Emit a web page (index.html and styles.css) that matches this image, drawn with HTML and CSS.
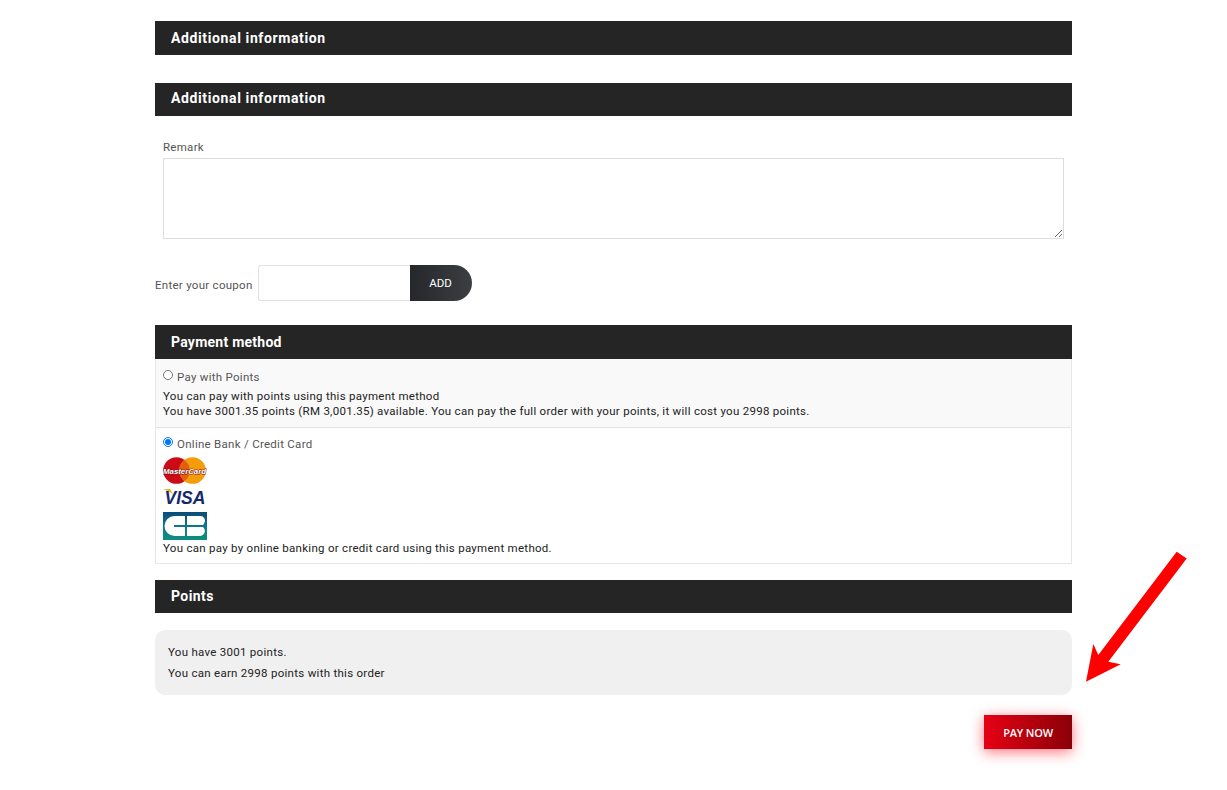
FILE: index.html
```html
<!DOCTYPE html>
<html lang="en">
<head>
<meta charset="utf-8">
<title>Checkout</title>
<link rel="stylesheet" href="styles.css">
</head>
<body>
<main class="page">
  <h2 class="bar bar-wide">Additional information</h2>
  <h2 class="bar bar-wide bar-second">Additional information</h2>
  <section class="remark">
    <label class="remark-label" for="remark">Remark</label>
    <textarea id="remark" class="remark-input"></textarea>
  </section>
  <div class="coupon">
    <label class="coupon-label" for="coupon">Enter your coupon</label>
    <input id="coupon" class="coupon-input" type="text">
    <button class="coupon-btn" type="button">ADD</button>
  </div>
  <h2 class="bar bar-payment">Payment method</h2>
  <section class="methods">
    <div class="method method-points">
      <label class="method-label"><input class="radio" type="radio" name="pay">Pay with Points</label>
      <p class="method-text">You can pay with points using this payment method<br>You have 3001.35 points (RM 3,001.35) available. You can pay the full order with your points, it will cost you 2998 points.</p>
    </div>
    <div class="method method-card">
      <label class="method-label"><input class="radio" type="radio" name="pay" checked>Online Bank / Credit Card</label>
      <div class="logos">
        <svg class="logo" width="44" height="27" viewBox="0 0 44 27" role="img" aria-label="MasterCard">
          <circle cx="13.500" cy="13.500" r="13.300" fill="#cc0b16"/>
          <circle cx="29.500" cy="13.500" r="13.300" fill="#f59c0d"/>
          <path d="M21.500 2.900a13.300 13.300 0 0 1 0 21.200a13.300 13.300 0 0 1 0-21.200z" fill="#e0600f"/>
          <text class="mc-text" x="21.500" y="16.500">MasterCard</text>
        </svg>
        <svg class="logo" width="44" height="23" viewBox="0 0 44 23" role="img" aria-label="Visa">
          <path d="M0 4h7l4 7C8 7 4 5 0 4z" fill="#f2ae14"/>
          <text class="visa-text" x="1.500" y="18.500">VISA</text>
        </svg>
        <svg class="logo logo-cb" width="44" height="28" viewBox="0 0 44 28" role="img" aria-label="CB">
          <defs>
            <linearGradient id="cbg" x1="0" y1="0" x2="0" y2="1">
              <stop offset="0" stop-color="#0b4a78"/>
              <stop offset=".55" stop-color="#0d7a92"/>
              <stop offset="1" stop-color="#0f8f7c"/>
            </linearGradient>
          </defs>
          <rect width="44" height="28" fill="url(#cbg)"/>
          <path d="M22 4H11.500a10 10 0 0 0 0 20H22v-9H11v-2h11z" fill="#fff"/>
          <path d="M24 4h13.500a4.500 4.500 0 0 1 4 6.500q-.5 1.500-1.500 2.500H24zM24 15h16q1.500 1 1.800 3.500A5 5 0 0 1 37 24H24z" fill="#fff"/>
        </svg>
      </div>
      <p class="method-text">You can pay by online banking or credit card using this payment method.</p>
    </div>
  </section>
  <h2 class="bar bar-points">Points</h2>
  <section class="points">
    <p class="points-line">You have 3001 points.</p>
    <p class="points-line">You can earn 2998 points with this order</p>
  </section>
  <div class="actions">
    <button class="pay" type="button">PAY NOW</button>
  </div>
</main>
<svg class="arrow" width="1227" height="790" viewBox="0 0 1227 790" aria-hidden="true">
  <path d="M1176.700 551.700L1186.700 558.500L1108.300 661.700L1120.700 664.300L1086 681.700L1093.300 644L1098.300 655z" fill="#fe0000"/>
</svg>
</body>
</html>
```
FILE: styles.css
```css
* { box-sizing: border-box; }
html, body { margin: 0; padding: 0; background: #fff; }
body {
  font-family: Roboto, "Liberation Sans", sans-serif;
  font-size: 11.500px;
  color: #222;
  letter-spacing: .28px;
  height: 790px;
  overflow: hidden;
  position: relative;
}
.page {
  width: 917px;
  margin-left: 155px;
  padding-top: 21px;
}
.bar {
  margin: 0;
  height: 34px;
  line-height: 34px;
  padding-left: 16px;
  background: #252525;
  color: #fff;
  font-size: 14px;
  font-weight: 700;
  letter-spacing: .25px;
}
.bar-wide { letter-spacing: .62px; }
.bar-second { margin-top: 28px; height: 33px; line-height: 31px; }
.remark { padding: 24px 8px 0; }
.remark-label {
  display: block;
  color: #555;
  height: 18px;
  line-height: 15px;
}
.remark-input {
  display: block;
  width: 901px;
  height: 81px;
  border: 1px solid #ddd;
  background: #fff;
  resize: both;
  margin: 0;
  outline: 0;
}
.coupon {
  display: flex;
  align-items: center;
  margin-top: 26px;
  height: 36px;
}
.coupon-label { color: #555; margin-right: 5px; position: relative; top: 2px; }
.coupon-input {
  width: 152px;
  height: 36px;
  border: 1px solid #e2e2e2;
  border-right: 0;
  background: #fff;
  margin: 0;
  outline: 0;
  border-radius: 3px 0 0 3px;
}
.coupon-btn {
  width: 62px;
  height: 36px;
  border: 0;
  padding: 0;
  background: linear-gradient(90deg, #25272a, #3c3e41);
  color: #fff;
  font: 400 11.500px Roboto, "Liberation Sans", sans-serif;
  border-radius: 0 18px 18px 0;
}
.bar-payment { margin-top: 24px; }
.methods { border: 1px solid #e6e6e6; border-top: 0; }
.method-points {
  background: #f9f9f9;
  height: 69px;
  padding: 10px 7px 0;
  border-bottom: 1px solid #e3e3e3;
}
.method-card { height: 135px; padding: 8px 7px 0; }
.method-label {
  display: flex;
  align-items: center;
  height: 16px;
  color: #555;
}
.radio {
  width: 10px;
  height: 10px;
  margin: 0 4px 4px 0;
  flex: none;
}
.method-text {
  margin: 4px 0 0;
  line-height: 15px;
  color: #222;
  white-space: nowrap;
}
.logos { display: flex; flex-direction: column; align-items: flex-start; margin-top: 5px; }
.logo { display: block; margin-bottom: 1px; }
.logo-cb { margin-top: 3px; margin-bottom: 0; }
.method-card .method-text { margin-top: 1px; }
.mc-text {
  font: italic 700 7.800px "Liberation Sans", sans-serif;
  fill: #fff;
  text-anchor: middle;
  stroke: #7a1020;
  stroke-width: .9px;
  paint-order: stroke;
  letter-spacing: 0;
}
.visa-text {
  font: italic 700 17.500px "Liberation Sans", sans-serif;
  fill: #14296b;
  letter-spacing: 0;
}
.bar-points { margin-top: 16px; height: 33px; line-height: 32px; letter-spacing: .4px; }
.points {
  margin-top: 17px;
  height: 65px;
  padding: 12px 13px 0;
  background: #f0f0f0;
  border-radius: 10px;
}
.points-line { margin: 0; height: 21px; line-height: 21px; }
.actions { display: flex; justify-content: flex-end; margin-top: 20px; }
.pay {
  width: 88px;
  height: 34px;
  border: 0;
  padding: 0;
  background: linear-gradient(90deg, #e60014, #8a0008);
  color: #fff;
  font: 600 11px "Open Sans", Roboto, sans-serif;
  letter-spacing: -.2px;
  box-shadow: 0 3px 14px rgba(255, 0, 20, .55);
}
.arrow { position: absolute; left: 0; top: 0; pointer-events: none; }
```
